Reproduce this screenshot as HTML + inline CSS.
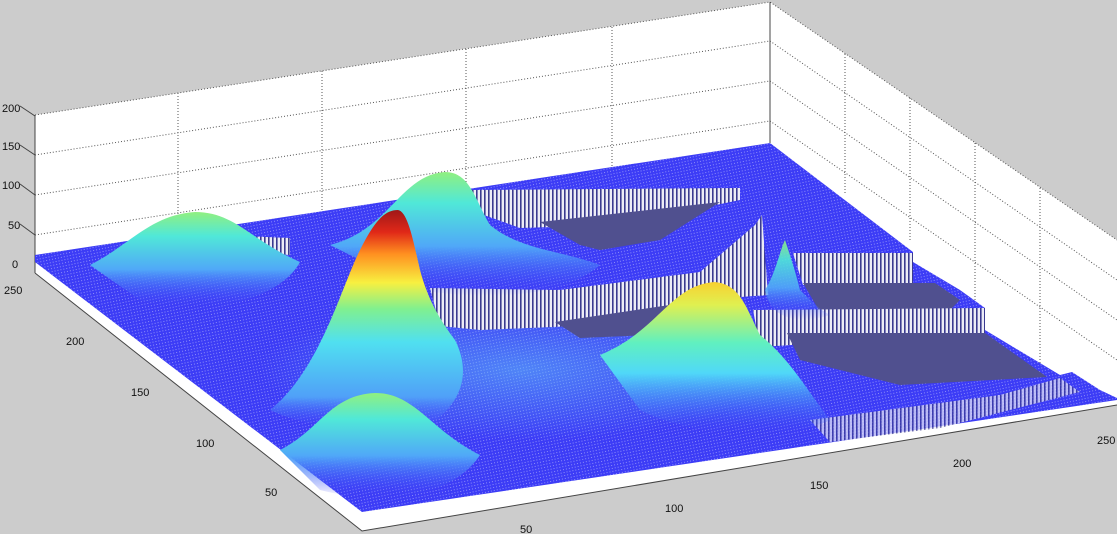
<!DOCTYPE html>
<html><head><meta charset="utf-8"><style>
html,body{margin:0;padding:0;background:#cccccc;width:1117px;height:534px;overflow:hidden}
svg{display:block}
text{font-family:"Liberation Sans",sans-serif;font-size:11px;fill:#111}
</style></head><body>
<svg width="1117" height="534" viewBox="0 0 1117 534">
<defs>
<pattern id="mesh" width="3" height="3" patternUnits="userSpaceOnUse" patternTransform="rotate(-12)">
<rect width="3" height="3" fill="#3c3cf6"/><rect x="0" y="0" width="1" height="1" fill="#8f8ffa"/>
</pattern>
<pattern id="curt" width="4" height="4" patternUnits="userSpaceOnUse">
<rect width="4" height="4" fill="#ececf6"/><rect width="1.6" height="4" fill="#3a3a90"/>
</pattern>
<linearGradient id="gRed" x1="0" y1="0" x2="0" y2="1">
<stop offset="0" stop-color="#a01818"/><stop offset="0.1" stop-color="#e02818"/><stop offset="0.2" stop-color="#ff9020"/><stop offset="0.33" stop-color="#f8f040"/><stop offset="0.45" stop-color="#80f090"/><stop offset="0.6" stop-color="#50e0f0"/><stop offset="0.85" stop-color="#50a0f8"/><stop offset="1" stop-color="#4040f8" stop-opacity="0"/>
</linearGradient>
<linearGradient id="gCy" x1="0" y1="0" x2="0" y2="1">
<stop offset="0" stop-color="#90f080"/><stop offset="0.25" stop-color="#50e8d8"/><stop offset="0.6" stop-color="#50a8f8"/><stop offset="1" stop-color="#4040f8" stop-opacity="0"/>
</linearGradient>
<linearGradient id="gYl" x1="0" y1="0" x2="0" y2="1">
<stop offset="0" stop-color="#f8d030"/><stop offset="0.15" stop-color="#e0f050"/><stop offset="0.4" stop-color="#60f0c0"/><stop offset="0.6" stop-color="#50d8f8"/><stop offset="1" stop-color="#4050f8" stop-opacity="0"/>
</linearGradient>
<radialGradient id="glow" cx="0.5" cy="0.5" r="0.5">
<stop offset="0" stop-color="#60c0f8" stop-opacity="0.55"/><stop offset="1" stop-color="#60c0f8" stop-opacity="0"/>
</radialGradient>
</defs>
<!-- walls -->
<polygon points="35,115 770,2 770,143 35,255" fill="#fff"/>
<polygon points="770,2 1117,240 1117,405 770,143" fill="#fff"/>
<polygon points="35,255 770,143 1117,400 1117,405 362,531 35,273" fill="#fff"/>
<g stroke="#555" stroke-width="1" stroke-dasharray="1,2" fill="none">
<polyline points="35,115 770,2 1117,240"/>
<line x1="35" y1="155" x2="770" y2="41"/><line x1="35" y1="195" x2="770" y2="81"/><line x1="35" y1="235" x2="770" y2="121"/>
<line x1="770" y1="41" x2="1117" y2="280"/><line x1="770" y1="81" x2="1117" y2="320"/><line x1="770" y1="121" x2="1117" y2="360"/>
<line x1="178" y1="93" x2="178" y2="233"/><line x1="322" y1="71" x2="322" y2="211"/><line x1="466" y1="49" x2="466" y2="189"/><line x1="612" y1="27" x2="612" y2="167"/>
<line x1="845" y1="54" x2="845" y2="195"/><line x1="910" y1="98" x2="910" y2="240"/><line x1="975" y1="143" x2="975" y2="330"/><line x1="1040" y1="188" x2="1040" y2="370"/>
</g>
<g stroke="#444" stroke-width="1" fill="none">
<line x1="35" y1="115" x2="35" y2="273"/><line x1="770" y1="2" x2="770" y2="143"/>
<polyline points="35,273 362,531 1117,405"/>
<line x1="20" y1="106" x2="35" y2="116"/><line x1="20" y1="145" x2="35" y2="155"/><line x1="20" y1="184" x2="35" y2="195"/><line x1="20" y1="224" x2="35" y2="235"/>
</g>
<!-- surface -->
<polygon points="35,255 770,143 913,252 913,262 960,290 985,308 985,330 1060,375 1072,372 1100,390 1117,398 1117,400 362,512 35,262" fill="url(#mesh)"/>
<ellipse cx="520" cy="370" rx="260" ry="70" fill="url(#glow)"/>
<!-- curtains -->
<polygon points="470,190 740,188 740,200 620,225 520,228 470,210" fill="url(#curt)"/>
<polygon points="540,222 720,202 660,240 600,250 580,245" fill="#50508f"/>
<polygon points="430,288 560,290 700,272 755,225 762,215 768,295 700,300 600,325 480,330 440,326" fill="url(#curt)"/>
<polygon points="555,322 690,302 650,335 580,338" fill="#50508f"/>
<polygon points="793,253 913,253 913,283 803,285" fill="url(#curt)"/>
<polygon points="803,283 935,283 960,300 950,310 820,312" fill="#50508f"/>
<polygon points="753,310 985,308 985,333 760,347" fill="url(#curt)"/>
<polygon points="787,333 985,333 1047,377 900,385 800,360" fill="#50508f"/>
<polygon points="810,420 1000,395 1060,378 1080,392 940,428 830,442" fill="url(#curt)" opacity="0.7"/>
<polygon points="240,236 290,238 290,255 250,252" fill="url(#curt)"/>
<!-- peaks -->
<path d="M90,265 C130,245 150,215 195,212 C235,212 250,240 300,262 C280,300 200,320 140,300 Z" fill="url(#gCy)"/>
<path d="M330,245 C390,230 400,175 445,172 C470,172 475,200 490,225 C520,250 560,250 600,265 C560,300 480,300 420,290 Z" fill="url(#gCy)"/>
<path d="M270,410 C320,370 340,290 360,250 C375,220 385,210 398,210 C408,212 413,240 420,270 C428,300 440,320 455,340 C470,370 465,400 430,425 C380,435 310,430 270,410 Z" fill="url(#gRed)"/>
<path d="M280,450 C320,430 330,395 375,393 C415,393 430,430 480,455 C450,500 380,505 320,490 Z" fill="url(#gCy)"/>
<path d="M600,355 C660,330 670,285 715,282 C740,285 745,305 760,335 C790,360 800,380 830,420 C790,440 700,440 640,410 Z" fill="url(#gYl)"/>
<path d="M765,290 C775,275 780,250 785,240 C790,255 795,270 800,290 C810,300 820,310 830,315 C800,325 770,320 765,290 Z" fill="url(#gCy)" opacity="0.9"/>
<!-- labels -->
<text x="2" y="112">200</text><text x="2" y="150">150</text><text x="2" y="189">100</text><text x="8" y="229">50</text><text x="12" y="268">0</text>
<text x="4" y="294">250</text><text x="66" y="345">200</text><text x="131" y="396">150</text><text x="196" y="447">100</text><text x="265" y="496">50</text>
<text x="520" y="533">50</text><text x="665" y="512">100</text><text x="810" y="489">150</text><text x="953" y="467">200</text><text x="1097" y="444">250</text>
</svg>
</body></html>
